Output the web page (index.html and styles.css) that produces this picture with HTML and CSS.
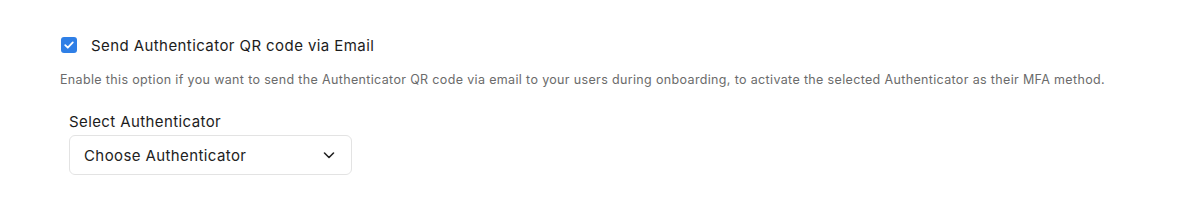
FILE: index.html
```html
<!DOCTYPE html>
<html>
<head>
<meta charset="utf-8">
<link rel="stylesheet" href="styles.css">
</head>
<body>
<div class="panel">
  <label class="check-row">
    <span class="checkbox">
      <svg width="12" height="12" viewBox="0 0 12 12"><path d="M2.2 6.2 L4.8 8.7 L9.8 3.4" fill="none" stroke="#fff" stroke-width="1.8" stroke-linecap="round" stroke-linejoin="round"/></svg>
    </span>
    <span class="check-label">Send Authenticator QR code via Email</span>
  </label>
  <p class="desc">Enable this option if you want to send the Authenticator QR code via email to your users during onboarding, to activate the selected Authenticator as their MFA method.</p>
  <div class="field">
    <div class="field-label">Select Authenticator</div>
    <div class="select">
      <span class="select-text">Choose Authenticator</span>
      <svg class="chev" width="14" height="14" viewBox="0 0 14 14"><path d="M2.5 5 L7 9.5 L11.5 5" fill="none" stroke="#222" stroke-width="1.6" stroke-linecap="round" stroke-linejoin="round"/></svg>
    </div>
  </div>
</div>
</body>
</html>
```
FILE: styles.css
```css
html, body {
  margin: 0;
  padding: 0;
  background: #ffffff;
}
body {
  font-family: Inter, "Noto Sans", sans-serif;
  color: #1f1f1f;
}
.panel {
  padding: 36px 0 0 60px;
}
.check-row {
  display: flex;
  align-items: center;
  gap: 14px;
  padding-left: 1px;
  height: 18px;
}
.checkbox {
  width: 16px;
  height: 16px;
  border-radius: 3px;
  background: #2f7fe6;
  display: flex;
  align-items: center;
  justify-content: center;
}
.check-label {
  font-size: 15px;
  letter-spacing: 0.42px;
  color: #1c1c1c;
}
.desc {
  margin: 18px 0 0 0;
  font-size: 12.5px;
  letter-spacing: 0.35px;
  color: #6b6b6b;
  line-height: 16px;
}
.field {
  margin: 25px 0 0 9px;
}
.field-label {
  font-size: 15px;
  letter-spacing: 0.4px;
  color: #1c1c1c;
  line-height: 18px;
}
.select {
  margin-top: 4px;
  height: 38px;
  border: 1px solid #e3e3e3;
  border-radius: 6px;
  display: flex;
  align-items: center;
  justify-content: space-between;
  padding: 0 15px 0 14px;
  box-sizing: content-box;
  width: 252px;
}
.select-text {
  font-size: 15px;
  letter-spacing: 0.4px;
  color: #222;
}
.chev {
  display: block;
}
```
